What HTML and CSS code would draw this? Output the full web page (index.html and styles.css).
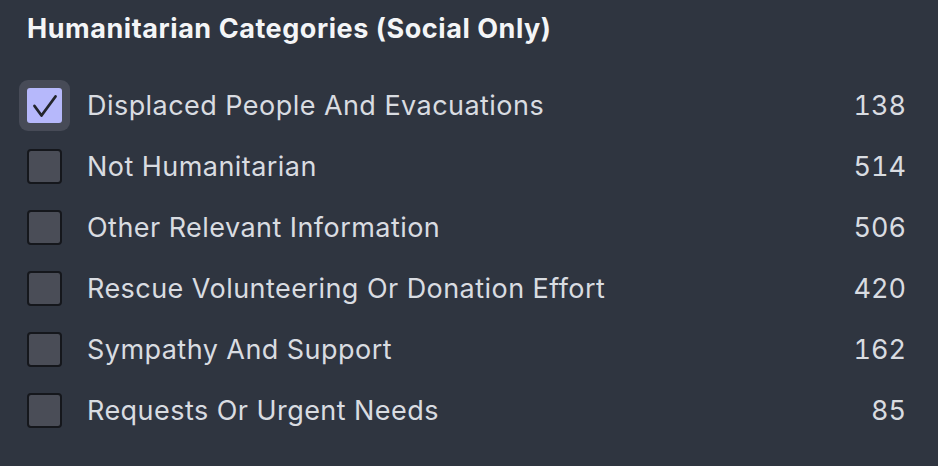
FILE: index.html
```html
<!DOCTYPE html>
<html lang="en">
<head>
<meta charset="utf-8">
<title>Humanitarian Categories</title>
<link rel="stylesheet" href="styles.css">
</head>
<body>
<section class="panel">
  <h2 class="title">Humanitarian Categories (Social Only)</h2>
  <ul class="list">
    <li class="row">
      <span class="box checked"><svg viewBox="0 0 35 35" width="35" height="35"><path d="M7.5 18 L14.5 27.5 L28.5 8.5" fill="none" stroke="#23252c" stroke-width="2.8" stroke-linecap="round" stroke-linejoin="round"/></svg></span>
      <span class="label">Displaced People And Evacuations</span>
      <span class="count">138</span>
    </li>
    <li class="row">
      <span class="box"></span>
      <span class="label">Not Humanitarian</span>
      <span class="count">514</span>
    </li>
    <li class="row">
      <span class="box"></span>
      <span class="label">Other Relevant Information</span>
      <span class="count">506</span>
    </li>
    <li class="row">
      <span class="box"></span>
      <span class="label">Rescue Volunteering Or Donation Effort</span>
      <span class="count">420</span>
    </li>
    <li class="row">
      <span class="box"></span>
      <span class="label">Sympathy And Support</span>
      <span class="count">162</span>
    </li>
    <li class="row">
      <span class="box"></span>
      <span class="label">Requests Or Urgent Needs</span>
      <span class="count">85</span>
    </li>
  </ul>
</section>
</body>
</html>
```
FILE: styles.css
```css
html, body {
  margin: 0;
  padding: 0;
  background: #2f3540;
}
body {
  font-family: Inter, "Noto Sans", sans-serif;
  width: 938px;
  height: 466px;
  overflow: hidden;
}
.panel {
  padding: 13px 32px 0 27px;
}
.title {
  margin: 0 0 30px 0;
  font-size: 27px;
  line-height: 32px;
  font-weight: 700;
  letter-spacing: 0.55px;
  color: #f4f5f7;
  white-space: nowrap;
}
.list {
  list-style: none;
  margin: 0;
  padding: 0;
}
.row {
  display: flex;
  align-items: center;
  height: 61px;
}
.box {
  flex: none;
  width: 35px;
  height: 35px;
  box-sizing: border-box;
  border: 2px solid #15171c;
  border-radius: 4px;
  background: #4a4d57;
  display: flex;
  align-items: center;
  justify-content: center;
}
.box.checked {
  border: none;
  background: #b6b8fb;
  box-shadow: 0 0 0 8px #474b57;
  border-radius: 3px;
}
.box svg {
  display: block;
}
.label {
  flex: 1;
  margin-left: 25px;
  font-size: 27px;
  letter-spacing: 0.45px;
  color: #d9dce1;
  white-space: nowrap;
}
.count {
  font-size: 27px;
  font-variant-numeric: tabular-nums;
  color: #d9dce1;
  text-align: right;
}
```
